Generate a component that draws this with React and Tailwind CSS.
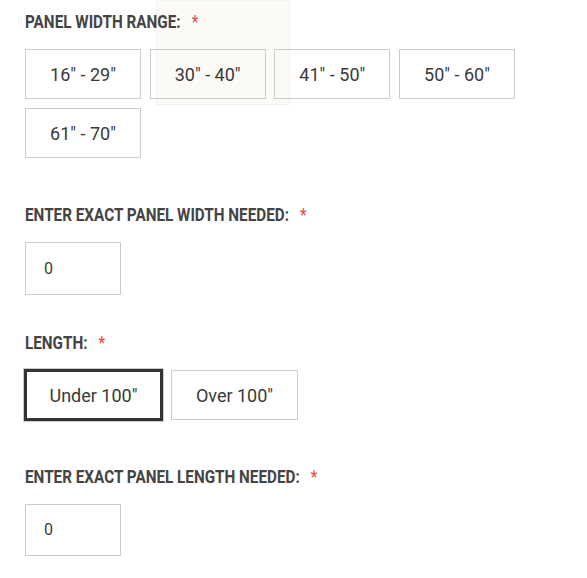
import React from "react";

const font = { fontFamily: "Roboto, 'Noto Sans', sans-serif" };

function Label({ text, className = "" }) {
  return (
    <div className={"h-[22px] leading-[22px] whitespace-nowrap " + className}>
      <span className="inline-block origin-left scale-x-[0.848] text-[18px] font-bold text-[#444444] font-['Roboto',sans-serif]">
        {text}
        <span className="ml-[13px] font-normal text-[#e8473b]">*</span>
      </span>
    </div>
  );
}

function Opt({ children, w = "w-[116px]" }) {
  return (
    <div
      className={
        w +
        " h-[50px] border border-[#cccccc] bg-transparent flex items-center justify-center text-[18px] text-[#3a3a3a] font-['Roboto',sans-serif]"
      }
    >
      {children}
    </div>
  );
}

export default function App() {
  return (
    <div className="relative w-[587px] h-[578px] bg-white" style={font}>
      <div className="absolute left-[156px] top-0 w-[134px] h-[105px] bg-[#fbfaf7] border border-[#f2f2f2] pointer-events-none" />
      <div className="relative pl-[25px] pt-[11px]">
        <Label text="PANEL WIDTH RANGE:" />
        <div className="mt-[16px] flex flex-wrap gap-x-[8.67px] gap-y-[9px] w-[520px]">
          <Opt>16" - 29"</Opt>
          <Opt>30" - 40"</Opt>
          <Opt>41" - 50"</Opt>
          <Opt>50" - 60"</Opt>
          <Opt>61" - 70"</Opt>
        </div>

        <Label text="ENTER EXACT PANEL WIDTH NEEDED:" className="mt-[46px]" />
        <div className="mt-[16px]">
          <div className="w-[96px] h-[53px] border border-[#cccccc] flex items-center pl-[18px] text-[16px] text-[#3a3a3a] font-['Roboto',sans-serif]">
            0
          </div>
        </div>

        <Label text="LENGTH:" className="mt-[37px]" />
        <div className="mt-[16px] flex items-center h-[50px]">
          <div className="-ml-[2px] w-[141px] h-[54px] border border-[#cccccc] shadow-[inset_0_0_0_3px_#333333] flex items-center justify-center text-[18px] text-[#3a3a3a] font-['Roboto',sans-serif]">
            Under 100"
          </div>
          <div className="ml-[7px]">
            <Opt w="w-[127px]">Over 100"</Opt>
          </div>
        </div>

        <Label text="ENTER EXACT PANEL LENGTH NEEDED:" className="mt-[46px]" />
        <div className="mt-[16px]">
          <div className="w-[96px] h-[52px] border border-[#cccccc] flex items-center pl-[18px] text-[16px] text-[#3a3a3a] font-['Roboto',sans-serif]">
            0
          </div>
        </div>
      </div>
    </div>
  );
}
